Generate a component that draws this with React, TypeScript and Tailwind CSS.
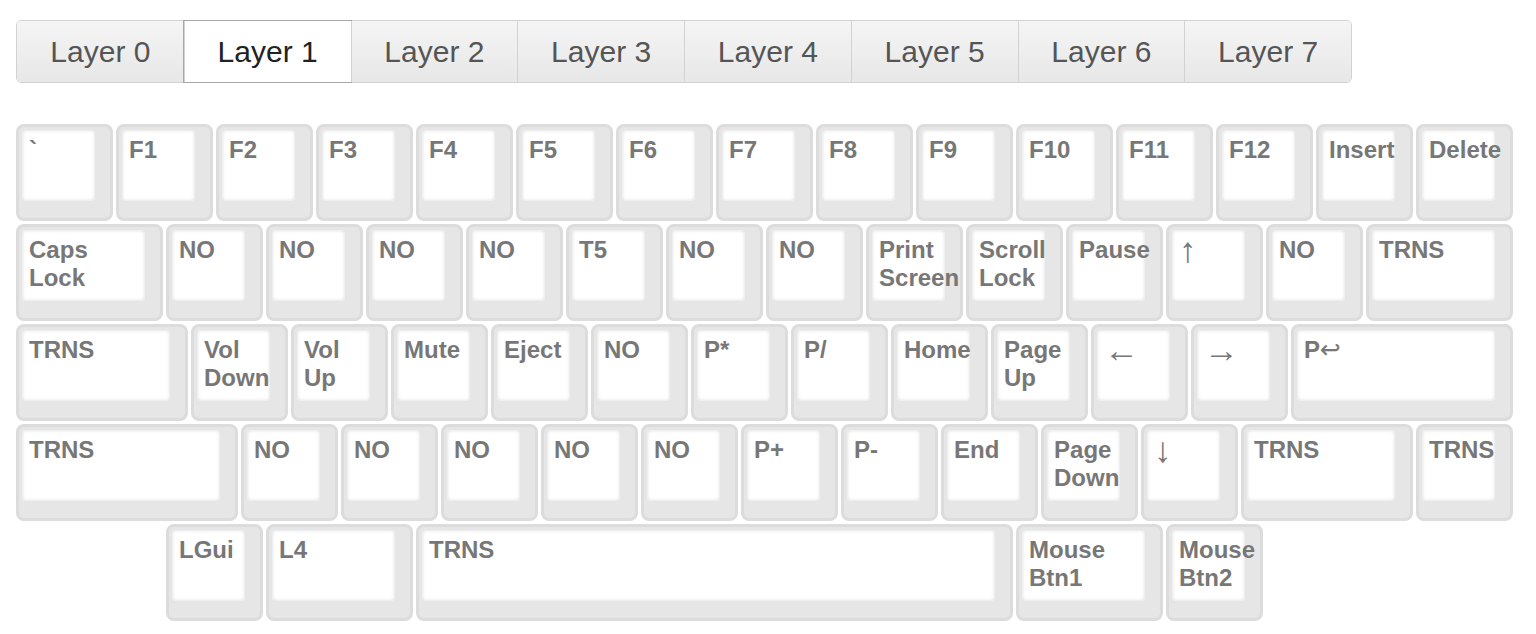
import React, { useState } from 'react';

type Key = { label: string[]; w?: number };

const k = (text: string, w = 1): Key => ({ label: text.split('|'), w });

const ROWS: { offset?: boolean; keys: Key[] }[] = [
  {
    keys: [
      k('`'), k('F1'), k('F2'), k('F3'), k('F4'), k('F5'), k('F6'), k('F7'),
      k('F8'), k('F9'), k('F10'), k('F11'), k('F12'), k('Insert'), k('Delete'),
    ],
  },
  {
    keys: [
      k('Caps|Lock', 1.5), k('NO'), k('NO'), k('NO'), k('NO'), k('T5'), k('NO'), k('NO'),
      k('Print|Screen'), k('Scroll|Lock'), k('Pause'), k('↑'), k('NO'), k('TRNS', 1.5),
    ],
  },
  {
    keys: [
      k('TRNS', 1.75), k('Vol|Down'), k('Vol|Up'), k('Mute'), k('Eject'), k('NO'), k('P*'),
      k('P/'), k('Home'), k('Page|Up'), k('←'), k('→'), k('P↩', 2.25),
    ],
  },
  {
    keys: [
      k('TRNS', 2.25), k('NO'), k('NO'), k('NO'), k('NO'), k('NO'), k('P+'), k('P-'),
      k('End'), k('Page|Down'), k('↓'), k('TRNS', 1.75), k('TRNS'),
    ],
  },
  {
    offset: true,
    keys: [k('LGui'), k('L4', 1.5), k('TRNS', 6), k('Mouse|Btn1', 1.5), k('Mouse|Btn2')],
  },
];

const WIDTHS: Record<number, string> = {
  1: 'w-[97px]',
  1.5: 'w-[147px]',
  1.75: 'w-[172px]',
  2.25: 'w-[222px]',
  6: 'w-[597px]',
};

const ARROWS = ['↑', '←', '→', '↓'];

// arrows are thin glyphs in the original, the rest of the legend is bold
function Legend({ text }: { text: string }) {
  return (
    <div className="font-bold">
      {Array.from(text).map((ch, i) => {
        if (ARROWS.includes(ch)) {
          return (
            <span key={i} className="inline-block h-[28px] text-[35px] leading-[28px] font-normal">
              {ch}
            </span>
          );
        }
        if (ch === '↩') {
          return (
            <span key={i} className="font-['DejaVu_Sans',sans-serif] text-[25px] font-normal">
              {ch}
            </span>
          );
        }
        return <span key={i}>{ch}</span>;
      })}
    </div>
  );
}

function KeyCap({ keyDef }: { keyDef: Key }) {
  return (
    <div
      className={`${WIDTHS[keyDef.w ?? 1]} h-[97px] shrink-0 rounded-[8px] border-[3px] border-[#dcdcdc] bg-[#e6e6e6] pt-[3px] pl-[3px] pr-[15px] pb-[17px]`}
    >
      <div className="h-full rounded-[4px] bg-white shadow-[inset_0_0_3px_1px_#e6e6e6] pl-[7px] pt-[6px] text-[24px] leading-[28px] text-[#777] whitespace-nowrap">
        {keyDef.label.map((line, i) => (
          <Legend key={i} text={line} />
        ))}
      </div>
    </div>
  );
}

export default function App() {
  const [layer, setLayer] = useState(1);

  return (
    <div className="min-h-[634px] bg-white pl-[16px] pt-[20px] font-['Liberation_Sans',Arial,sans-serif]">
      <div className="flex w-fit rounded-[5px] border border-[#d2d2d2]">
        {Array.from({ length: 8 }).map((_, i) => (
          <button
            key={i}
            onClick={() => setLayer(i)}
            className={`flex h-[61px] w-[166.75px] items-center justify-center text-[30px] ${
              i > 0 ? 'border-l border-[#d2d2d2]' : ''
            } ${i === 0 ? 'rounded-l-[4px]' : ''} ${i === 7 ? 'rounded-r-[4px]' : ''} ${
              layer === i
                ? 'bg-white text-[#222] outline outline-1 outline-[#a8a8a8]'
                : 'bg-gradient-to-b from-[#f5f5f5] to-[#e7e7e7] text-[#555]'
            }`}
          >
            Layer {i}
          </button>
        ))}
      </div>

      <div className="mt-[41px] flex flex-col gap-[3px]">
        {ROWS.map((row, r) => (
          <div key={r} className={`flex gap-[3px] ${row.offset ? 'pl-[150px]' : ''}`}>
            {row.keys.map((key, i) => (
              <KeyCap key={i} keyDef={key} />
            ))}
          </div>
        ))}
      </div>
    </div>
  );
}
